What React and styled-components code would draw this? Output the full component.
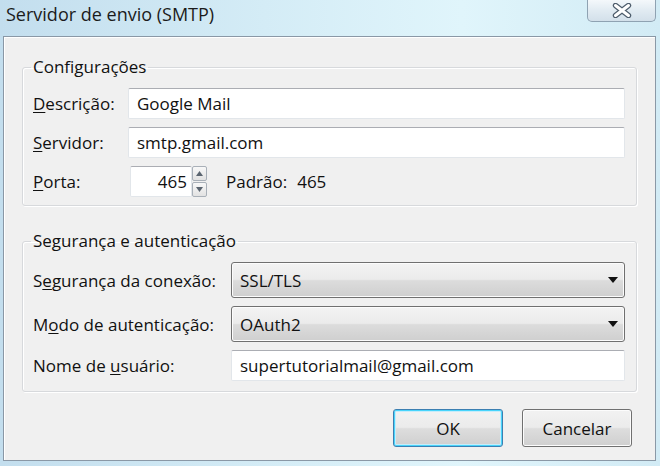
import React from 'react'
import styled, { createGlobalStyle } from 'styled-components'

const Global = createGlobalStyle`
  html, body {
    margin: 0;
    padding: 0;
    width: 660px;
    height: 466px;
    overflow: hidden;
  }
  body {
    font-family: "Open Sans", "Noto Sans", sans-serif;
    color: #000;
  }
`

const Window = styled.div`
  width: 660px;
  height: 466px;
  display: flex;
  flex-direction: column;
  background: linear-gradient(90deg, #c3deee 0%, #d4ecf6 40%, #e0f5fb 70%, #d2ebf5 100%);
  box-sizing: border-box;
`

const TitleBar = styled.div`
  height: 36px;
  display: flex;
  justify-content: space-between;
  align-items: flex-start;
  padding-left: 6px;
  padding-right: 4px;
  flex-shrink: 0;
`

const Title = styled.div`
  font-size: 18px;
  line-height: 22px;
  padding-top: 3px;
  color: #1b1b1b;
`

const CloseButton = styled.div`
  width: 69px;
  height: 22px;
  box-sizing: border-box;
  border: 1px solid #8fa2b2;
  border-top: none;
  border-radius: 0 0 5px 5px;
  background: linear-gradient(180deg, #f4f8fb 0%, #e1ebf2 50%, #d3e0ea 100%);
  display: flex;
  align-items: center;
  justify-content: center;
`

const Client = styled.div`
  flex: 1;
  margin: 0 4px 5px 3px;
  border: 1px solid #8a98a6;
  box-shadow: inset 1px 1px 0 #ffffff;
  background: #f0f0f0;
  padding: 20px 18px 0 18px;
  display: flex;
  flex-direction: column;
`

const Group = styled.fieldset`
  margin: 0 0 ${p => p.$after}px 0;
  border: 1px solid #d7d9dc;
  box-shadow: inset 1px 1px 0 #ffffff, 1px 1px 0 #ffffff;
  border-radius: 3px;
  padding: 0 11px ${p => p.$bottom}px 10px;
  min-width: 0;
`

const Legend = styled.legend`
  font-size: 17px;
  line-height: 20px;
  padding: 0 2px;
  margin-left: -2px;
  color: #111;
`

const Rows = styled.div`
  margin-top: 11px;
  display: flex;
  flex-direction: column;
  gap: ${p => p.$gap || 8}px;
`

const Row = styled.div`
  display: flex;
  align-items: center;
`

const Label = styled.div`
  width: ${p => p.$w}px;
  flex-shrink: 0;
  font-size: 17px;
  color: #111;
`

const U = styled.span`
  text-decoration: underline;
  text-underline-offset: 2px;
`

const TextBox = styled.div`
  flex: ${p => (p.$w ? '0 0 auto' : 1)};
  width: ${p => (p.$w ? `${p.$w}px` : 'auto')};
  height: 31px;
  box-sizing: border-box;
  background: #fff;
  border: 1px solid #e2e6ea;
  border-top-color: #abadb3;
  border-radius: 2px;
  font-size: 17px;
  line-height: 29px;
  padding: 0 ${p => (p.$right ? '4px' : '8px')};
  text-align: ${p => (p.$right ? 'right' : 'left')};
  color: #111;
`

const Spinner = styled.div`
  width: 15px;
  height: 31px;
  display: flex;
  flex-direction: column;
  gap: 1px;
`

const SpinBtn = styled.div`
  flex: 1;
  border: 1px solid #a9b0b8;
  border-radius: 2px;
  background: linear-gradient(180deg, #f8f8f8, #e2e2e2);
  display: flex;
  align-items: center;
  justify-content: center;
`

const Info = styled.span`
  font-size: 17px;
  margin-left: ${p => p.$ml}px;
  color: #111;
`

const Select = styled.div`
  flex: 1;
  height: 36px;
  box-sizing: border-box;
  border: 1px solid #707070;
  border-radius: 3px;
  background: linear-gradient(180deg, #f3f3f3 0%, #ebebeb 48%, #dcdcdc 52%, #cfcfcf 100%);
  box-shadow: inset 0 0 0 1px #fcfcfc;
  display: flex;
  align-items: center;
  justify-content: space-between;
  padding: 0 6px 0 8px;
  font-size: 17px;
  color: #111;
`

const Arrow = styled.span`
  width: 0;
  height: 0;
  border-left: 5px solid transparent;
  border-right: 5px solid transparent;
  border-top: 6px solid #111;
`

const Buttons = styled.div`
  display: flex;
  justify-content: flex-end;
  gap: 19px;
  padding-right: 5px;
`

const Button = styled.div`
  width: 110px;
  height: 38px;
  box-sizing: border-box;
  border: 1px solid ${p => (p.$default ? '#3c7fb1' : '#707070')};
  border-radius: 3px;
  background: linear-gradient(180deg, #f2f2f2 0%, #ebebeb 48%, #dddddd 52%, #cfcfcf 100%);
  box-shadow: ${p => (p.$default ? 'inset 0 0 0 1px #48d4fb, inset 0 0 0 2px #c6ecfa' : 'inset 0 0 0 1px #fcfcfc')};
  display: flex;
  align-items: center;
  justify-content: center;
  font-size: 17px;
  color: #111;
`

const CloseIcon = () => (
  <svg width="20" height="15" viewBox="0 0 20 15">
    <path d="M3.5 2.5 L16.5 12.5 M16.5 2.5 L3.5 12.5" stroke="#4e5d6c" strokeWidth="5.4" strokeLinecap="round" />
    <path d="M3.5 2.5 L16.5 12.5 M16.5 2.5 L3.5 12.5" stroke="#ffffff" strokeWidth="3" strokeLinecap="round" />
  </svg>
)

const Tri = ({ up }) => (
  <svg width="7" height="5" viewBox="0 0 7 5">
    <path d={up ? 'M0 5 L3.5 0 L7 5 Z' : 'M0 0 L3.5 5 L7 0 Z'} fill="#5b6570" />
  </svg>
)

export default function App() {
  return (
    <>
      <Global />
      <Window>
        <TitleBar>
          <Title>Servidor de envio (SMTP)</Title>
          <CloseButton>
            <CloseIcon />
          </CloseButton>
        </TitleBar>
        <Client>
          <Group $bottom={8} $after={25}>
            <Legend>Configurações</Legend>
            <Rows>
              <Row>
                <Label $w={95}><U>D</U>escrição:</Label>
                <TextBox>Google Mail</TextBox>
              </Row>
              <Row>
                <Label $w={95}><U>S</U>ervidor:</Label>
                <TextBox>smtp.gmail.com</TextBox>
              </Row>
              <Row>
                <Label $w={97}><U>P</U>orta:</Label>
                <TextBox $w={62} $right>465</TextBox>
                <Spinner>
                  <SpinBtn><Tri up /></SpinBtn>
                  <SpinBtn><Tri /></SpinBtn>
                </Spinner>
                <Info $ml={19}>Padrão:</Info>
                <Info $ml={10}>465</Info>
              </Row>
            </Rows>
          </Group>
          <Group $bottom={10} $after={17}>
            <Legend>Segurança e autenticação</Legend>
            <Rows $gap={8}>
              <Row>
                <Label $w={198}>S<U>e</U>gurança da conexão:</Label>
                <Select>SSL/TLS<Arrow /></Select>
              </Row>
              <Row>
                <Label $w={198}>M<U>o</U>do de autenticação:</Label>
                <Select>OAuth2<Arrow /></Select>
              </Row>
              <Row>
                <Label $w={198}>Nome de <U>u</U>suário:</Label>
                <TextBox>supertutorialmail@gmail.com</TextBox>
              </Row>
            </Rows>
          </Group>
          <Buttons>
            <Button $default>OK</Button>
            <Button>Cancelar</Button>
          </Buttons>
        </Client>
      </Window>
    </>
  )
}
